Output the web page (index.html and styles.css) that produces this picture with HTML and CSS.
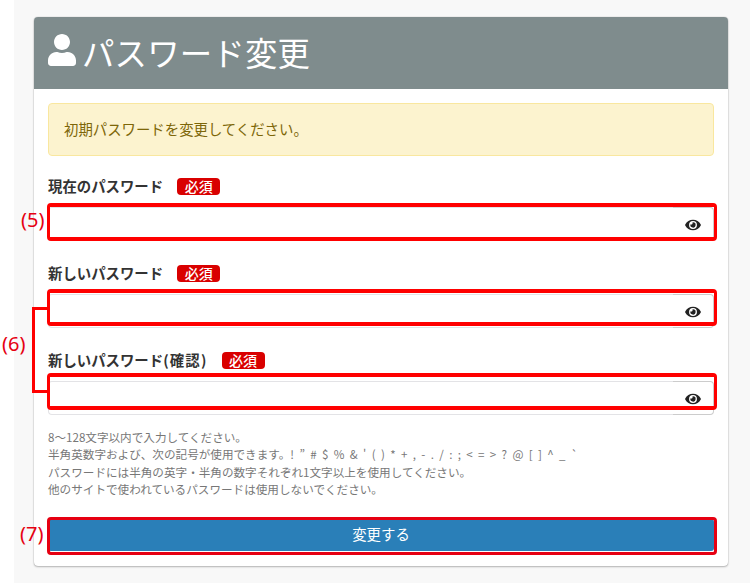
FILE: index.html
```html
<!DOCTYPE html>
<html lang="ja">
<head>
<meta charset="utf-8">
<title>パスワード変更</title>
<link rel="stylesheet" href="styles.css">
</head>
<body>
<main class="page">
  <section class="card">
    <header class="card-head">
      <svg class="user-icon" viewBox="0 0 448 512" aria-hidden="true"><path d="M224 256c70.7 0 128-57.3 128-128S294.7 0 224 0 96 57.3 96 128s57.3 128 128 128zm89.6 32h-16.7c-22.2 10.2-46.9 16-72.9 16s-50.6-5.8-72.9-16h-16.7C60.2 288 0 348.2 0 422.4V464c0 26.5 21.5 48 48 48h352c26.5 0 48-21.5 48-48v-41.6c0-74.2-60.2-134.4-134.4-134.4z"/></svg>
      <h1 class="title">パスワード変更</h1>
    </header>
    <div class="card-body">
      <div class="alert">初期パスワードを変更してください。</div>
      <div class="field">
        <div class="label-row"><label class="label">現在のパスワード</label><span class="badge">必須</span></div>
        <div class="input-group">
          <div class="input"></div>
          <div class="addon"><svg class="eye" viewBox="0 0 576 512" aria-hidden="true"><path d="M572.52 241.4C518.29 135.59 410.93 64 288 64S57.68 135.64 3.48 241.41a32.35 32.35 0 0 0 0 29.19C57.71 376.41 165.07 448 288 448s230.32-71.64 284.52-177.41a32.35 32.35 0 0 0 0-29.19zM288 400a144 144 0 1 1 144-144 143.93 143.93 0 0 1-144 144zm0-240a95.31 95.31 0 0 0-25.31 3.79 47.85 47.85 0 0 1-66.9 66.9A95.78 95.78 0 1 0 288 160z"/></svg></div>
        </div>
      </div>
      <div class="field">
        <div class="label-row"><label class="label">新しいパスワード</label><span class="badge">必須</span></div>
        <div class="input-group">
          <div class="input"></div>
          <div class="addon"><svg class="eye" viewBox="0 0 576 512" aria-hidden="true"><path d="M572.52 241.4C518.29 135.59 410.93 64 288 64S57.68 135.64 3.48 241.41a32.35 32.35 0 0 0 0 29.19C57.71 376.41 165.07 448 288 448s230.32-71.64 284.52-177.41a32.35 32.35 0 0 0 0-29.19zM288 400a144 144 0 1 1 144-144 143.93 143.93 0 0 1-144 144zm0-240a95.31 95.31 0 0 0-25.31 3.79 47.85 47.85 0 0 1-66.9 66.9A95.78 95.78 0 1 0 288 160z"/></svg></div>
        </div>
      </div>
      <div class="field">
        <div class="label-row"><label class="label">新しいパスワード<span class="paren">(確認)</span></label><span class="badge">必須</span></div>
        <div class="input-group">
          <div class="input"></div>
          <div class="addon"><svg class="eye" viewBox="0 0 576 512" aria-hidden="true"><path d="M572.52 241.4C518.29 135.59 410.93 64 288 64S57.68 135.64 3.48 241.41a32.35 32.35 0 0 0 0 29.19C57.71 376.41 165.07 448 288 448s230.32-71.64 284.52-177.41a32.35 32.35 0 0 0 0-29.19zM288 400a144 144 0 1 1 144-144 143.93 143.93 0 0 1-144 144zm0-240a95.31 95.31 0 0 0-25.31 3.79 47.85 47.85 0 0 1-66.9 66.9A95.78 95.78 0 1 0 288 160z"/></svg></div>
        </div>
      </div>
      <p class="help">8～128文字以内で入力してください。<br>半角英数字および、次の記号が使用できます。<span class="symbols">! ” # $ % &amp; ' ( ) * + , - . / : ; &lt; = &gt; ? @ [ ] ^ _ `</span><br>パスワードには半角の英字・半角の数字それぞれ1文字以上を使用してください。<br>他のサイトで使われているパスワードは使用しないでください。</p>
      <button class="submit" type="button">変更する</button>
    </div>
  </section>
</main>
<div class="mark mark-current"></div>
<div class="mark mark-new"></div>
<div class="mark mark-confirm"></div>
<div class="mark mark-submit"></div>
<div class="bracket"></div>
<span class="note note-5">(5)</span>
<span class="note note-6">(6)</span>
<span class="note note-7">(7)</span>
</body>
</html>
```
FILE: styles.css
```css
* { box-sizing: border-box; }
html, body { margin: 0; padding: 0; background: #fff; }
body {
  position: relative;
  width: 750px;
  height: 584px;
  overflow: hidden;
  font-family: "Noto Sans CJK JP", "Noto Sans", sans-serif;
  color: #333;
}
.page {
  margin-left: 14px;
  height: 583px;
  padding: 17px 22px 0 20px;
  background: #f8f8f8;
}
.card {
  height: 549px;
  background: #fff;
  border-radius: 4px;
  box-shadow: 0 0 1px rgba(0,0,0,.35), 0 1px 2px rgba(0,0,0,.25);
  overflow: hidden;
}
.card-head {
  display: flex;
  align-items: center;
  gap: 6px;
  height: 72px;
  padding-left: 14px;
  background: #7f8c8d;
  color: #fff;
}
.user-icon { width: 28px; height: 32px; fill: #fff; margin-top: -7px; flex: none; }
.title { margin: -2px 0 0; font-size: 32.4px; font-weight: 400; line-height: 1; letter-spacing: .2px; }
.card-body { padding: 14px; }
.alert {
  height: 53px;
  padding: 0 15px 2px;
  display: flex;
  align-items: center;
  background: #fcf3cf;
  border: 1px solid #f9e79f;
  border-radius: 4px;
  color: #7d6608;
  font-size: 14.4px;
}
.field { margin-top: 22px; }
.alert + .field { margin-top: 20px; }
.label-row { display: flex; align-items: center; height: 20px; margin-bottom: 11px; }
.label { font-size: 14.4px; font-weight: 700; line-height: 20px; }
.paren { letter-spacing: 1.2px; }
.badge {
  margin-left: 14px;
  width: 43px;
  height: 17px;
  border-radius: 4px;
  background: #d90000;
  color: #fff;
  font-size: 14px;
  font-weight: 500;
  line-height: 17px;
  text-align: center;
}
.input-group { display: flex; height: 34px; }
.input {
  flex: 1;
  background: #fff;
  border: 1px solid #e3e3e6;
  border-right: 0;
  border-radius: 4px 0 0 4px;
}
.addon {
  width: 41px;
  display: flex;
  align-items: center;
  justify-content: center;
  padding-top: 1px;
  background: #fff;
  border: 1px solid #ccc;
  border-left: 0;
  border-radius: 0 4px 4px 0;
}
.eye { width: 16px; height: 14px; fill: #222; }
.help {
  margin: 14px 0 0;
  font-size: 11.6px;
  line-height: 17.4px;
  color: #777;
}
.symbols { letter-spacing: .95px; word-spacing: .85px; }
.submit {
  display: block;
  width: 100%;
  height: 32px;
  margin-top: 20px;
  padding: 0 0 2px;
  border: 0;
  border-radius: 3px;
  background: #2a7fb8;
  color: #fff;
  font: 400 14.4px/30px "Noto Sans CJK JP", "Noto Sans", sans-serif;
}
.mark {
  position: absolute;
  left: 47px;
  width: 670px;
  border: solid #f00;
  border-width: 4px 3.5px;
  border-radius: 4px;
}
.mark-current { top: 203px; height: 38px; }
.mark-new { top: 289px; height: 37px; }
.mark-confirm { top: 373px; height: 37px; }
.mark-submit { top: 517px; height: 38px; border-color: #e60012; border-width: 3px; }
.bracket {
  position: absolute;
  left: 32px;
  top: 307px;
  width: 16px;
  height: 86px;
  border: solid #f00;
  border-width: 3px 0 3px 3px;
}
.note {
  position: absolute;
  color: #e60012;
  font: 400 20px/24px "Noto Sans", sans-serif;
}
.note-5 { left: 21px; top: 208px; }
.note-6 { left: 2px; top: 332px; }
.note-7 { left: 20px; top: 522px; }
```
